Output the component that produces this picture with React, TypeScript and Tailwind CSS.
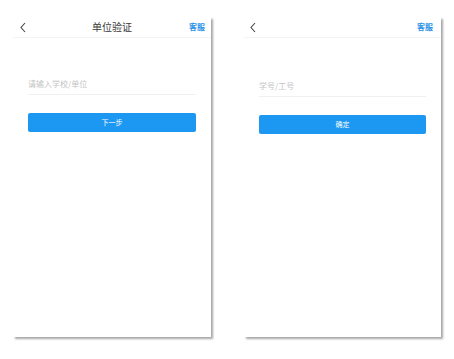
import React from 'react';

const font = { fontFamily: '"Noto Sans CJK SC", "Noto Sans", sans-serif' };

const BackIcon = () => (
  <svg width="8" height="11" viewBox="0 0 8 11" fill="none">
    <path d="M6 1 L2 5.5 L6 10" stroke="#444" strokeWidth="1.1" />
  </svg>
);

interface ScreenProps {
  title?: string;
  placeholder: string;
  action: string;
  inputTop: string;
  headerPad: string;
}

const Screen: React.FC<ScreenProps & { className: string }> = ({ title, placeholder, action, inputTop, headerPad, className }) => (
  <div className={`h-[320px] bg-white shadow-[2px_2px_2px_rgba(0,0,0,0.35)] flex flex-col ${className}`}>
    {/* header */}
    <div className={`h-[21px] flex items-center justify-between border-b border-[#f4f4f4] relative ${headerPad}`}>
      <BackIcon />
      {title && (
        <span className="absolute left-0 right-0 text-center text-[10px] text-[#3a3a3a] leading-none">{title}</span>
      )}
      <span className="text-[8px] font-bold text-[#2a92e6] leading-none relative">客服</span>
    </div>

    <div className="px-[15px]">
      <div className={`${inputTop} h-[22px] flex items-center border-b border-[#f0f0f0]`}>
        <span className="text-[8px] text-[#c4c4c4] leading-none">{placeholder}</span>
      </div>
      <button className="mt-[18px] w-full h-[19px] bg-[#1c98f3] rounded-[2px] text-white text-[7px] leading-none flex items-center justify-center">
        {action}
      </button>
    </div>
  </div>
);

export default function App() {
  return (
    <div className="w-[454px] h-[359px] bg-white pt-[17px] flex" style={font}>
      <Screen className="ml-[13px] w-[198px]" headerPad="pl-[6px] pr-[6px]" title="单位验证" placeholder="请输入学校/单位" action="下一步" inputTop="mt-[35px]" />
      <Screen className="ml-[33px] w-[197px]" headerPad="pl-[5px] pr-[8px]" placeholder="学号/工号" action="确定" inputTop="mt-[37px]" />
    </div>
  );
}
